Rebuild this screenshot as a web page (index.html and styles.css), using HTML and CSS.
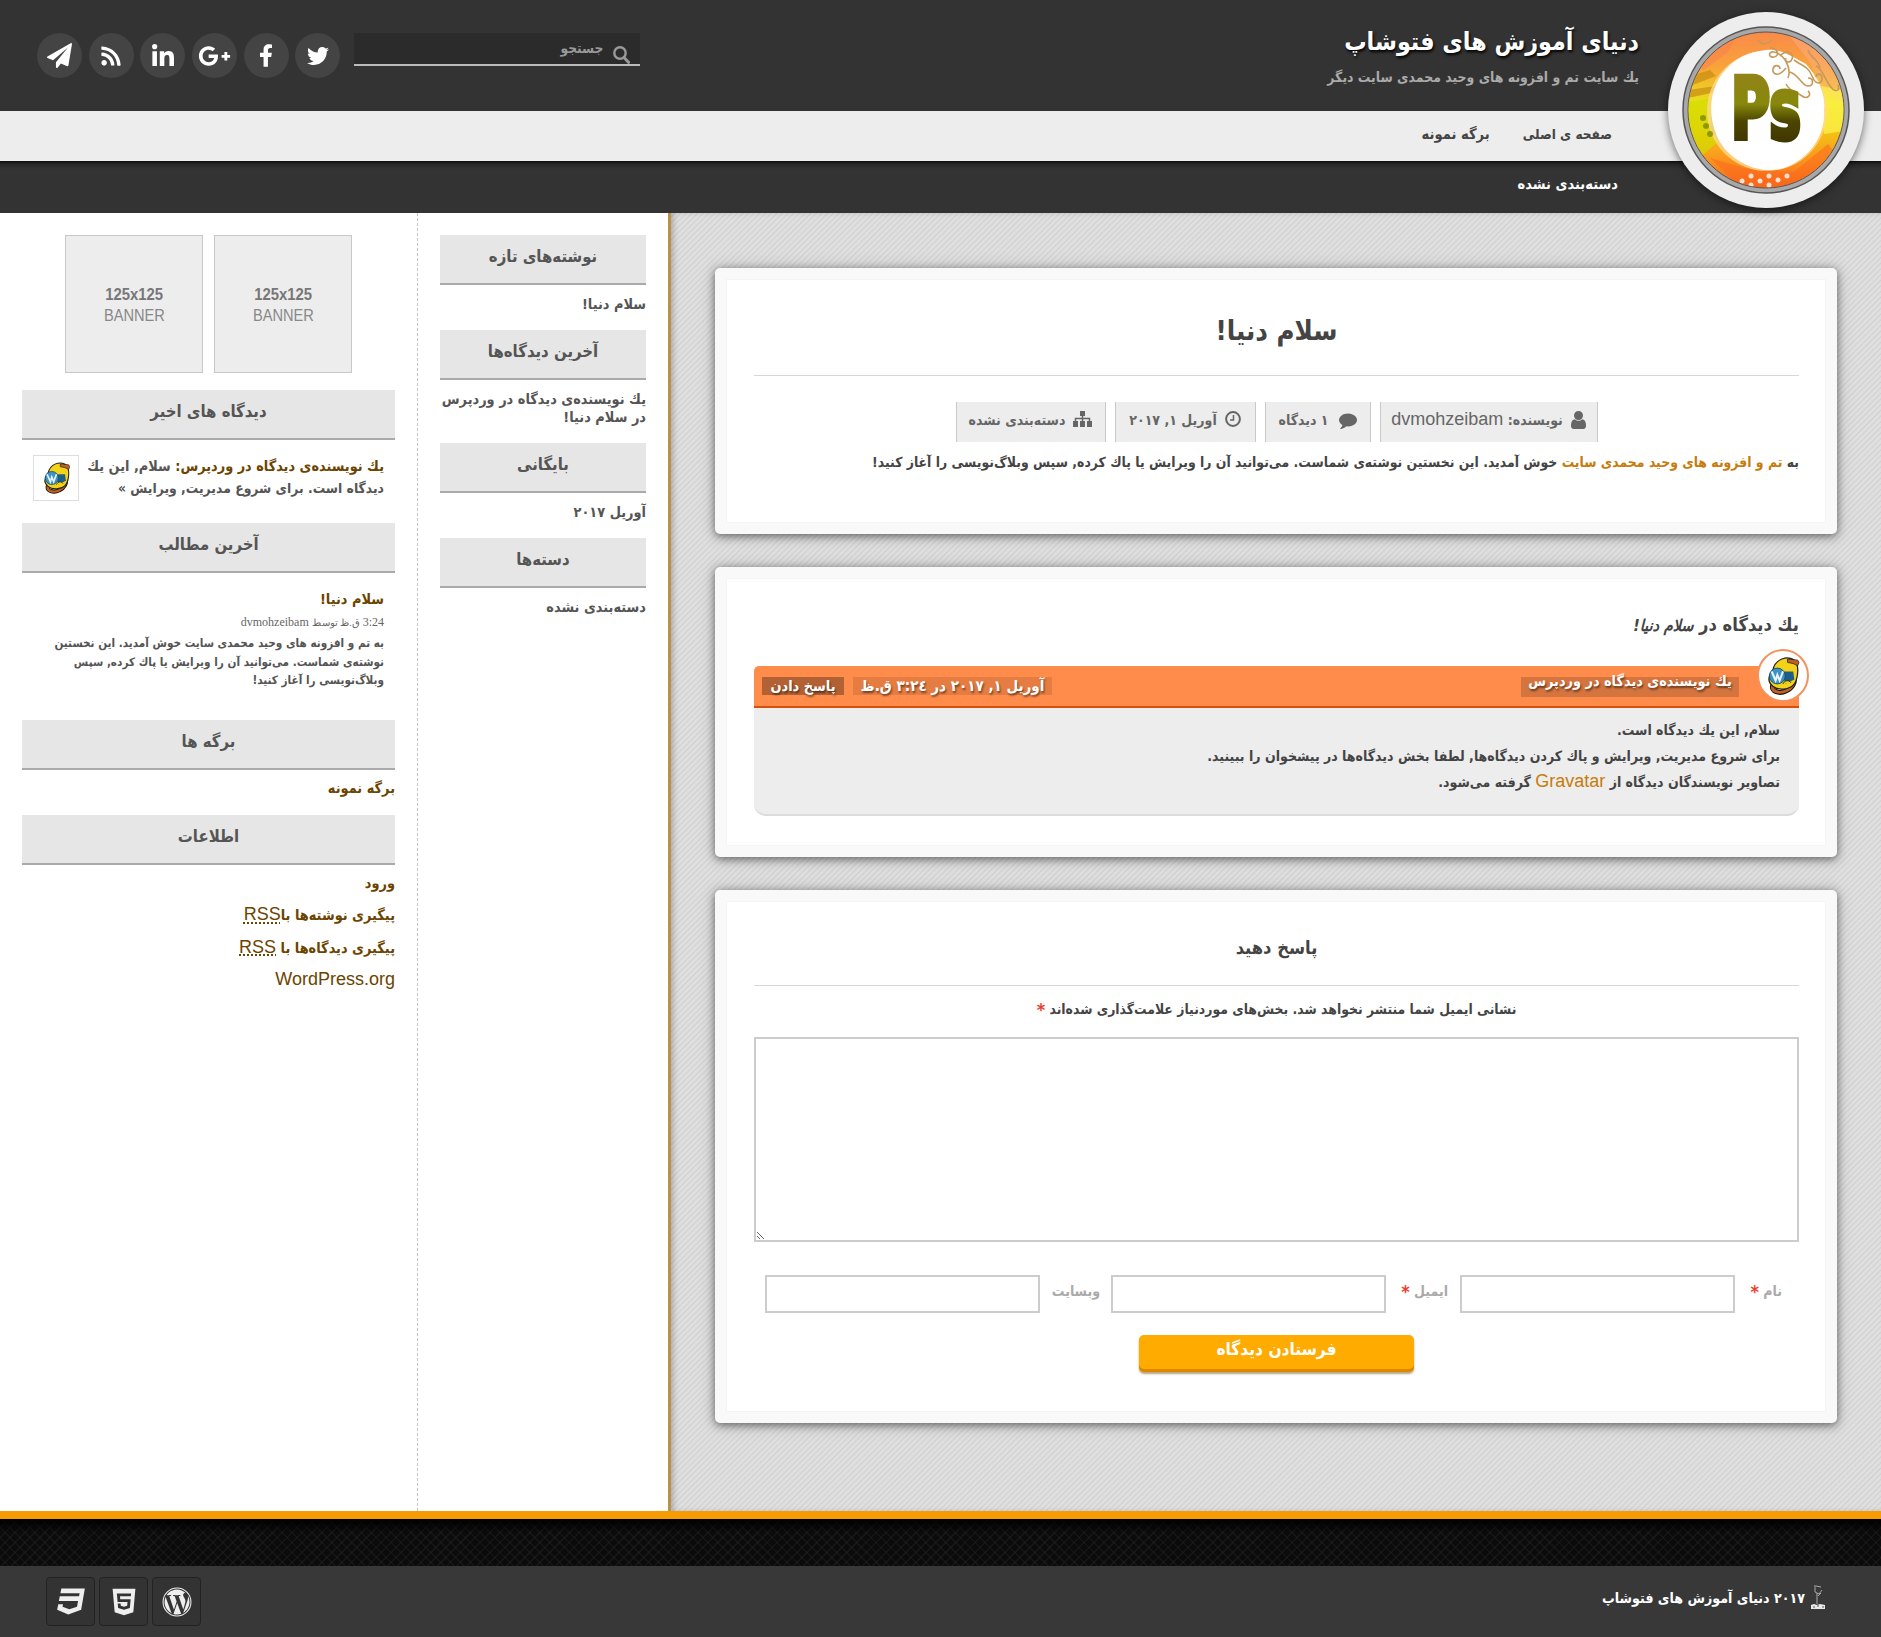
FILE: index.html
```html
<!DOCTYPE html>
<html lang="fa" dir="rtl">
<head>
<meta charset="utf-8">
<title>سلام دنیا!</title>
<link rel="stylesheet" href="styles.css">
</head>
<body>
<svg width="0" height="0" class="defs">
  <defs>
    <symbol id="wapuu" viewBox="0 0 30 34">
      <path d="M6 25c-2 6 6 8 12 5 5-2 8-7 7-13" fill="none" stroke="#111" stroke-width="4.400"/>
      <path d="M6 25c-2 6 6 8 12 5 5-2 8-7 7-13" fill="none" stroke="#c2601f" stroke-width="2.600"/>
      <path d="M14 2c5-2 11-1 13 4s1 15-3 19-13 5-18 1-4-9 0-14c1-5 3-8 8-10z" fill="#f4d218" stroke="#222" stroke-width="1.100"/>
      <path d="M19 2l9 1 1 2-1 3-4-2-5-1z" fill="#c2601f" stroke="#222" stroke-width=".7"/>
      <path d="M14 13h10l1 7-8 4z" fill="#1d5f86"/>
      <circle cx="10" cy="17" r="7" fill="#3a93c4" stroke="#1c4a66" stroke-width=".8"/>
      <path d="M5 13l3.500 8 1.500-5 2 5 3-8" fill="none" stroke="#e8f4fb" stroke-width="1.800"/>
      <path d="M15 24c1-3 5-4 7-1" fill="#f4d218" stroke="#222" stroke-width=".8"/>
    </symbol>
  </defs>
</svg>
<header class="header">
  <div class="top">
    <div class="brand">
      <h1>دنیای آموزش های فتوشاپ</h1>
      <p>یك سایت تم و افزونه های وحید محمدی سایت دیگر</p>
    </div>
    <div class="tools">
      <div class="search">
        <svg width="17" height="18" viewBox="0 0 17 18"><circle cx="7" cy="7" r="5.700" fill="none" stroke="#999" stroke-width="2.400"/><path d="M11 11.500l4.500 4.800" stroke="#999" stroke-width="3" stroke-linecap="round"/></svg>
        <span>جستجو</span>
      </div>
      <ul class="social">
        <li><svg width="22" height="22" viewBox="0 0 512 512"><path d="M459.370 151.716c.325 4.548.325 9.097.325 13.645 0 138.720-105.583 298.558-298.558 298.558-59.452 0-114.680-17.219-161.137-47.106 8.447.974 16.568 1.299 25.340 1.299 49.055 0 94.213-16.568 130.274-44.832-46.132-.975-84.792-31.188-98.112-72.772 6.498.974 12.995 1.624 19.818 1.624 9.421 0 18.843-1.300 27.614-3.573-48.081-9.747-84.143-51.980-84.143-102.985v-1.299c13.969 7.797 30.214 12.670 47.431 13.319-28.264-18.843-46.781-51.005-46.781-87.391 0-19.492 5.197-37.360 14.294-52.954 51.655 63.675 129.300 105.258 216.365 109.807-1.624-7.797-2.599-15.918-2.599-24.040 0-57.828 46.782-104.934 104.934-104.934 30.213 0 57.502 12.670 76.670 33.137 23.715-4.548 46.456-13.320 66.599-25.340-7.798 24.366-24.366 44.833-46.132 57.827 21.117-2.273 41.584-8.122 60.426-16.243-14.292 20.791-32.161 39.308-52.628 54.253z"/></svg></li>
        <li><svg width="14" height="23" viewBox="0 0 320 512"><path d="M279.140 288l14.220-92.660h-88.910v-60.130c0-25.350 12.420-50.060 52.240-50.060h40.420V6.260S260.430 0 225.360 0c-73.220 0-121.080 44.380-121.080 124.720v70.620H22.890V288h81.390v224h100.170V288z"/></svg></li>
        <li><svg width="33" height="26" viewBox="0 0 640 512"><path d="M386.061 228.496c1.834 9.692 3.143 19.384 3.143 31.956C389.204 370.205 315.599 448 204.800 448c-106.084 0-192-85.915-192-192s85.916-192 192-192c51.864 0 95.083 18.859 128.611 50.292l-52.126 50.030c-14.145-13.621-39.028-29.599-76.485-29.599-65.484 0-118.920 54.221-118.920 121.277 0 67.056 53.436 121.277 118.920 121.277 75.961 0 104.513-54.745 108.965-82.773H204.800v-66.009h181.261zm185.406 6.437V179.200h-56.001v55.733h-55.733v56.001h55.733v55.733h56.001v-55.733H627.200v-56.001h-55.733z"/></svg></li>
        <li><svg width="22" height="24" viewBox="0 0 448 490"><path d="M100.280 448H7.400V148.900h92.880zM53.790 108.100C24.090 108.100 0 83.500 0 53.800a53.790 53.790 0 0 1 107.580 0c0 29.700-24.100 54.300-53.790 54.300zM447.900 448h-92.680V302.400c0-34.700-.7-79.200-48.290-79.200-48.290 0-55.690 37.700-55.690 76.700V448h-92.780V148.900h89.080v40.800h1.300c12.400-23.500 42.690-48.300 87.880-48.300 94 0 111.280 61.900 111.280 142.300V448z"/></svg></li>
        <li><svg width="20" height="22" viewBox="0 0 448 512"><path d="M128.081 415.959c0 35.369-28.672 64.041-64.041 64.041S0 451.328 0 415.959s28.672-64.041 64.041-64.041 64.040 28.673 64.040 64.041zm175.660 47.250c-8.354-154.600-132.185-278.587-286.950-286.950C7.656 175.765 0 183.105 0 192.253v48.069c0 8.415 6.490 15.472 14.887 16.018 111.832 7.284 201.473 96.702 208.772 208.772.547 8.397 7.604 14.887 16.018 14.887h48.069c9.149.001 16.489-7.655 15.995-16.790zm144.249.288C439.596 229.677 251.465 40.445 16.503 32.010 7.473 31.686 0 38.981 0 48.016v48.068c0 8.625 6.835 15.645 15.453 15.999 191.179 7.839 344.627 161.316 352.465 352.465.353 8.618 7.373 15.453 15.999 15.453h48.068c9.034-.001 16.329-7.474 16.005-16.504z"/></svg></li>
        <li><svg width="25" height="25" viewBox="0 0 1792 1792"><path d="M1764 11q33 24 27 64l-256 1536q-5 29-32 45-14 8-31 8-11 0-24-5l-453-185-242 295q-18 23-49 23-13 0-22-4-19-7-30.500-23.500t-11.500-36.500v-349l864-1059-1069 925-395-162q-37-14-40-55-2-40 32-59l1664-960q15-9 32-9 20 0 36 11z"/></svg></li>
      </ul>
    </div>
  </div>
  <nav class="nav"><a>صفحه ی اصلی</a><a class="n2">برگه نمونه</a></nav>
  <nav class="subnav"><a>دسته‌بندی نشده</a></nav>
  <div class="logo">
    <svg width="168" height="168" viewBox="0 0 168 168">
      <defs>
        <linearGradient id="rim" x1="0" y1="0" x2="0" y2="1"><stop offset="0" stop-color="#f98a4b"/><stop offset=".22" stop-color="#f9a23a"/><stop offset=".45" stop-color="#e8e01c"/><stop offset=".6" stop-color="#f0cd10"/><stop offset=".8" stop-color="#fb9a1e"/><stop offset="1" stop-color="#f4631c"/></linearGradient>
        <linearGradient id="ink" x1="0" y1="0" x2="0" y2="1"><stop offset="0" stop-color="#97801d"/><stop offset=".45" stop-color="#87880c"/><stop offset=".62" stop-color="#4c4600"/><stop offset="1" stop-color="#352a00"/></linearGradient>
        <clipPath id="disc"><circle cx="84" cy="84" r="77.500"/></clipPath>
      </defs>
      <circle cx="84" cy="84" r="83" fill="#a8a8a8" stroke="#555" stroke-width="1.500"/>
      <circle cx="84" cy="84" r="78" fill="url(#rim)" stroke="#555"/>
      <g clip-path="url(#disc)">
        <path d="M0 0h60L46 26 22 44 8 40z" fill="#fb7e4d" opacity=".5"/>
        <path d="M100 0l68 10v70l-22-10-20-36z" fill="#ffb08a" opacity=".45"/>
        <path d="M6 76l26-4 10 38-22 20-14-14z" fill="#d3dc00" opacity=".7"/>
        <path d="M32 72c8 10 14 30 10 52l-14-22z" fill="#8f9a00" opacity=".6"/>
        <path d="M140 60l28 6v38l-26 4z" fill="#fff34f" opacity=".7"/>
        <path d="M8 50l20-6 6 6-26 10zM6 64l28-4v6l-28 6z" fill="#c98b12" opacity=".7"/>
        <path d="M28 132l34 10 50 4 34-28 8 10-30 34H60z" fill="#fd6a1b" opacity=".55"/>
        <circle cx="85" cy="85" r="60" fill="#ffd98e" opacity=".8"/>
        <path d="M84 24c14-2 28 8 40 14 10 12 20 28 18 46 2 26-16 50-40 58-26 8-58-8-68-34-8-20-6-44 6-60 12-16 26-22 44-24z" fill="#fff"/>
        <g fill="#fff" opacity=".8"><circle cx="60" cy="155" r="2.500"/><circle cx="69" cy="150" r="2.500"/><circle cx="69" cy="159" r="2.500"/><circle cx="78" cy="155" r="2.500"/><circle cx="87" cy="150" r="2.500"/><circle cx="87" cy="159" r="2.500"/><circle cx="96" cy="154" r="2.500"/><circle cx="105" cy="150" r="2.500"/></g>
        <g fill="#7c8900" opacity=".8"><circle cx="21" cy="92" r="3"/><circle cx="24" cy="100" r="3"/><circle cx="28" cy="108" r="3"/></g>
        <g fill="none" stroke="#c79a5c" stroke-width="1.600"><path d="M76 14c4 6 10 4 14 0M88 22c8 0 10 8 4 9s-6-6 0-5c10 2 18 16 14 26M98 30c8-8 14-2 12 3s-8 3-6-1M104 42c-8 10-14 6-13 1s7-4 7 0M108 46c10 4 12 14 18 14s6-8 0-8M112 34c8 6 14 6 18 16s10 8 10 2-6-4-6-1M104 58c4 8 10 8 16 12s10-2 6-5M134 40c6 2 8 12 14 20s10 4 8-1M126 24c2 8 10 8 12 18"/></g>
      </g>
      <text x="49" y="113" direction="ltr" class="ps" textLength="70" lengthAdjust="spacingAndGlyphs" fill="url(#ink)" stroke="url(#ink)" stroke-width="5">Ps</text>
    </svg>
  </div>
</header>

<div class="page">
  <main class="main">
    <article class="card post">
      <h2 class="post-title">سلام دنیا!</h2>
      <div class="meta">
        <span class="m1"><svg width="15" height="18" viewBox="256 128 1280 1536"><path d="M1536 1399q0 109-62.500 187t-150.500 78h-854q-88 0-150.500-78t-62.500-187q0-85 8.500-160.500t31.500-152 58.500-131 94-89 134.500-34.500q131 128 313 128t313-128q76 0 134.500 34.500t94 89 58.500 131 31.500 152 8.500 160.500zm-256-887q0 159-112.500 271.500t-271.500 112.500-271.500-112.500-112.500-271.500 112.500-271.500 271.500-112.500 271.500 112.500 112.500 271.500z"/></svg><i>نویسنده: <b class="lat">dvmohzeibam</b></i></span>
        <span class="m2"><svg width="18" height="18" viewBox="0 0 1792 1792"><path d="M1792 896q0 174-120 321.500t-326 233-450 85.500q-70 0-145-8-198 175-460 242-49 14-114 22-17 2-30.500-9t-17.500-29v-1q-3-4-.5-12t2-10 4.500-9.500l6-9 7-8.500 8-9q7-8 31-34.500t34.500-38 31-39.500 32.500-51 27-59 26-76q-157-89-247.500-220t-90.500-281q0-130 71-248.500t191-204.500 286-136.500 348-50.500q244 0 450 85.500t326 233 120 321.500z"/></svg><i>۱ دیدگاه</i></span>
        <span class="m3"><svg width="16" height="16" viewBox="0 0 16 16"><circle cx="8" cy="8" r="6.900" fill="none" stroke="#666" stroke-width="2"/><path d="M8.500 4v5H5" fill="none" stroke="#666" stroke-width="1.500"/></svg><i>آوریل <b class="num">۱, ۲۰۱۷</b></i></span>
        <span class="m4"><svg width="19" height="16" viewBox="0 0 19 16"><path d="M7 0h5v5H7zM0 10h5v6H0zM7 10h5v6H7zM14 10h5v6h-5z"/><path d="M9.500 4v7M2.500 11V7.500h14V11" fill="none" stroke="#666" stroke-width="1.500"/></svg><i>دسته‌بندی نشده</i></span>
      </div>
      <p class="post-text">به <a>تم و افزونه های وحید محمدی سایت</a> خوش آمدید. این نخستین نوشته‌ی شماست. می‌توانید آن را ویرایش یا پاك كرده, سپس وبلاگ‌نویسی را آغاز كنید!</p>
    </article>

    <section class="card comments">
      <h3 class="comments-title">یك دیدگاه در <em>سلام دنیا!</em></h3>
      <div class="comment">
        <div class="comment-head">
          <span class="author">یك نویسنده‌ی دیدگاه در وردپرس</span>
          <span class="date">آوریل ۱, ۲۰۱۷ در ۳:۲٤ ق.ظ</span>
          <span class="reply">پاسخ دادن</span>
          <span class="avatar"><svg width="34" height="40"><use href="#wapuu"/></svg></span>
        </div>
        <div class="comment-body">
          <p class="c1">سلام, این یك دیدگاه است.</p>
          <p>برای شروع مدیریت, ویرایش و پاك كردن دیدگاه‌ها, لطفا بخش دیدگاه‌ها در پیشخوان را ببینید.</p>
          <p>تصاویر نویسندگان دیدگاه از <a class="lat">Gravatar</a> گرفته می‌شود.</p>
        </div>
      </div>
    </section>

    <section class="card respond">
      <h3 class="respond-title">پاسخ دهید</h3>
      <p class="note">نشانی ایمیل شما منتشر نخواهد شد. بخش‌های موردنیاز علامت‌گذاری شده‌اند <b class="req">*</b></p>
      <textarea class="area" aria-label="دیدگاه"></textarea>
      <div class="fields">
        <label>نام <b class="req">*</b></label><input type="text" class="f1">
        <label class="l2">ایمیل <b class="req">*</b></label><input type="text" class="f2">
        <label class="l3">وبسایت</label><input type="text">
      </div>
      <button class="submit">فرستادن دیدگاه</button>
    </section>
  </main>

  <aside class="side-mid">
    <h4>نوشته‌های تازه</h4><p>سلام دنیا!</p>
    <h4>آخرین دیدگاه‌ها</h4><p class="two">یك نویسنده‌ی دیدگاه در وردپرس<br>در سلام دنیا!</p>
    <h4>بایگانی</h4><p>آوریل <b class="num">۲۰۱۷</b></p>
    <h4>دسته‌ها</h4><p>دسته‌بندی نشده</p>
  </aside>

  <aside class="side-left">
    <div class="banners">
      <div class="banner"><strong>125x125</strong><span>BANNER</span></div>
      <div class="banner"><strong>125x125</strong><span>BANNER</span></div>
    </div>
    <h4>دیدگاه های اخیر</h4>
    <div class="recent">
      <p><a>یك نویسنده‌ی دیدگاه در وردپرس:</a> سلام, این یك<br><span class="l">دیدگاه است. برای شروع مدیریت, ویرایش »</span></p>
      <span class="thumb"><svg width="29" height="32"><use href="#wapuu"/></svg></span>
    </div>
    <h4>آخرین مطالب</h4>
    <div class="latest">
      <a>سلام دنیا!</a>
      <small>3:24 <span>ق.ظ توسط</span> dvmohzeibam</small>
      <p>به تم و افزونه های وحید محمدی سایت خوش آمدید. این نخستین<br>نوشته‌ی شماست. می‌توانید آن را ویرایش یا پاك كرده, سپس<br>وبلاگ‌نویسی را آغاز كنید!</p>
    </div>
    <h4>برگه ها</h4>
    <ul class="links one"><li>برگه نمونه</li></ul>
    <h4>اطلاعات</h4>
    <ul class="links">
      <li>ورود</li>
      <li>پیگیری نوشته‌ها با<abbr class="lat">RSS</abbr></li>
      <li>پیگیری دیدگاه‌ها با <abbr class="lat">RSS</abbr></li>
      <li><span class="lat">WordPress.org</span></li>
    </ul>
  </aside>
</div>

<footer>
  <div class="pattern"></div>
  <div class="bottom">
    <div class="copy">
      <svg width="16" height="26" viewBox="0 0 16 26"><path d="M1 25v-4l3-1 3 1 3-1 5 1v4z" fill="#e8e8e8"/><path d="M7 20V9M5 1v7l4 2 3-4M6 2l5 1M8 12l3-3" stroke="#aaa" fill="none"/><path d="M3 23h2m2-1h2m3 1h2" stroke="#555"/></svg>
      <span>۲۰۱۷ دنیای آموزش های فتوشاپ</span>
    </div>
    <div class="badges">
      <span><svg width="30" height="30" viewBox="0 0 512 512"><circle cx="256" cy="256" r="238" fill="none" stroke="#eee" stroke-width="18"/><path d="M61.700 169.400l101.500 278C92.200 413 43.300 340.200 43.300 256c0-30.900 6.600-60.100 18.400-86.600zm337.900 75.900c0-26.300-9.400-44.500-17.500-58.700-10.800-17.500-20.900-32.400-20.900-49.900 0-19.600 14.800-37.800 35.700-37.800.9 0 1.800.1 2.800.2-37.900-34.700-88.300-55.900-143.700-55.900-74.300 0-139.700 38.100-177.800 95.900 5 .2 9.700.3 13.700.3 22.200 0 56.700-2.700 56.700-2.700 11.500-.7 12.800 16.200 1.400 17.500 0 0-11.500 1.300-24.300 2l77.500 230.400L249.800 247l-33.100-90.800c-11.500-.7-22.300-2-22.300-2-11.500-.7-10.100-18.200 1.300-17.500 0 0 35.100 2.700 56 2.700 22.200 0 56.700-2.700 56.700-2.700 11.500-.7 12.800 16.200 1.400 17.500 0 0-11.500 1.300-24.300 2l76.900 228.700 21.200-70.900c9-29.400 16-50.500 16-68.700zm-139.900 29.300l-63.800 185.500c19.100 5.600 39.200 8.700 60.100 8.700 24.800 0 48.500-4.300 70.600-12.100-.6-.9-1.100-1.900-1.500-2.900l-65.400-179.200zm183-120.700c.9 6.800 1.400 14 1.400 21.900 0 21.600-4 45.800-16.200 76.200l-65 187.900C426.200 403 468.700 334.500 468.700 256c0-37-9.400-71.800-26-102.100z"/></svg></span>
      <span><svg width="24" height="28" viewBox="0 20 384 472"><path d="M0 32l34.900 395.800L191.500 480l157.600-52.200L384 32H0zm308.200 127.900H124.400l4.100 49.400h175.600l-13.600 148.400-97.900 27v.3h-1.100l-98.700-27.300-6-75.800h47.700L138 320l53.500 14.500 53.700-14.500 6-62.200H84.300L71.500 112.200h241.100l-4.400 47.700z"/></svg></span>
      <span><svg width="28" height="27" viewBox="0 22 480 468"><path d="M480 32l-64 368-223.300 80L0 400l19.600-94.800h82l-8 40.600L210 390.200l134.100-44.400 18.800-97.100H29.500l16-82h333.700l10.500-52.700H56.300l16.300-82H480z"/></svg></span>
    </div>
  </div>
</footer>
</body>
</html>
```
FILE: styles.css
```css
* { box-sizing: border-box; }
body {
  margin: 0;
  width: 1881px;
  font: bold 14px/22px "DejaVu Sans Condensed", "DejaVu Sans", sans-serif;
  color: #444;
  background: #fff;
  white-space: nowrap;
}
h1, h2, h3, h4, p, ul { margin: 0; padding: 0; }
ul { list-style: none; }
i { font-style: normal; }
.defs { position: absolute; }
.lat { font: 18px "Liberation Sans", Arial, sans-serif; }
.num { letter-spacing: 1.500px; }

/* header */
.header { position: relative; height: 213px; }
.top { height: 111px; background: #333; display: flex; justify-content: space-between; padding: 0 242px 0 37px; }
.brand h1 { font-size: 24.800px; line-height: 36px; color: #fff; padding-top: 24px; text-shadow: 1px 2px 3px #000; }
.brand p { font-size: 13.900px; line-height: 22px; color: #aaa; padding-top: 6px; }
.tools { display: flex; padding-top: 33px; gap: 14px; }
.search { width: 286px; height: 33px; background: #2b2b2b; border-bottom: 2px solid #bbb; display: flex; padding-right: 10px; gap: 10px; color: #999; font-size: 13.700px; line-height: 30px; }
.search svg { margin-top: 13px; }
.social { display: flex; gap: 6.700px; }
.social li { width: 45px; height: 45px; border-radius: 50%; background: #444; display: flex; align-items: center; justify-content: center; }
.social svg { fill: #fff; }
.nav { height: 50px; background: #ededed; display: flex; gap: 33px; padding-right: 269px; line-height: 46px; color: #444; font-size: 13.500px; }
.n2 { font-size: 14.600px; }
.subnav { height: 52px; background: linear-gradient(#0d0d0d, #262626 3px, #333 8px); padding-right: 263px; line-height: 46px; color: #fff; font-size: 14.500px; }
.logo { position: absolute; left: 1668px; top: 12px; width: 196px; height: 196px; border-radius: 50%; background: #ededed; padding: 14px; box-shadow: 0 2px 8px rgba(0,0,0,.55); }
.logo svg { display: block; }
.ps { font: bold 86px "DejaVu Sans Condensed", sans-serif; }

/* columns */
.page { display: flex; height: 1298px; }
.main {
  width: 1210px; padding: 55px 44px 0; display: flex; flex-direction: column; gap: 33px;
  background: repeating-linear-gradient(135deg, #dfdfdf 0 2px, #cfcfcf 3px, #dfdfdf 4px);
  box-shadow: inset 4px 0 6px -2px rgba(0,0,0,.25);
}
.side-mid { width: 254px; border-right: 3px solid #b8914a; border-left: 1px dashed #c4c4c4; padding: 22px 22px 0; color: #555; }
.side-left { width: 417px; padding: 22px 22px 0; color: #555; }
aside h4 { height: 50px; background: #e6e6e6; border-bottom: 2px solid #aaa; text-align: center; font-size: 16.600px; line-height: 44px; color: #555; }

/* cards */
.card {
  border: 11px solid #f9f9f9; border-radius: 5px; background: #fff; padding: 0 27px 0 28px;
  background-clip: padding-box;
  box-shadow: 0 2px 8px rgba(0,0,0,.5), 0 1px 18px rgba(0,0,0,.16), inset 0 0 0 1px #f4f4f4;
}
.post { height: 266px; }
.comments { height: 290px; }
.respond { height: 533px; }
.post-title { height: 97px; border-bottom: 1px solid #d8d8d8; text-align: center; font-size: 27.400px; line-height: 104px; }
.meta { display: flex; justify-content: center; gap: 9px; margin-top: 26px; color: #666; }
.meta span { height: 40px; background: #ededed; border: solid #c8c8c8; border-width: 0 1px; display: flex; justify-content: center; gap: 8px; line-height: 36px; }
.meta svg { fill: #666; margin-top: 9px; }
.meta .m1 { width: 218px; }
.meta .m2 { width: 106px; gap: 10px; }
.meta .m3 { width: 141px; }
.meta .m4 { width: 150px; }
.meta i { line-height: 36px; }
.post-text { margin-top: 9px; font-size: 13.870px; line-height: 22px; }
.post-text a { color: #c77b0a; }
.comments-title { height: 88px; font-size: 18.200px; line-height: 94px; }
.comments-title em { font-size: 16px; }
.comment-head { position: relative; height: 42px; background: #ff8c4b; border-bottom: 2px solid #d9500b; border-radius: 5px 5px 0 0; display: flex; gap: 9px; padding: 11px 60px 0 8px; color: #fff; text-shadow: 1px 2px 2px rgba(0,0,0,.5); line-height: 18px; }
.author { width: 218px; height: 20px; background: rgba(0,0,0,.17); text-align: center; font-size: 14.350px; line-height: 9px; margin-left: auto; }
.date { width: 199px; height: 18px; background: rgba(0,0,0,.1); text-align: center; font-size: 15px; }
.reply { width: 82px; height: 18px; background: rgba(0,0,0,.3); text-align: center; font-size: 14.400px; }
.avatar { position: absolute; right: -10px; top: -17px; width: 52px; height: 53px; border-radius: 50%; border: 2px solid #f2925c; background: #fff; display: flex; align-items: center; justify-content: center; }
.comment-body { height: 108px; background: #ededed; border-bottom: 2px solid #dcdcdc; border-radius: 0 0 12px 12px; padding: 9px 19px 0; font-size: 14px; line-height: 26px; }
.comment-body p { height: 26px; line-height: 26px; }
.comment-body a { color: #c77b0a; }
.respond-title { height: 85px; border-bottom: 1px solid #d8d8d8; text-align: center; font-size: 18.200px; line-height: 94px; }
.note { height: 51px; text-align: center; font-size: 13.850px; line-height: 46px; }
.req { color: #f03c2d; font-size: 18px; line-height: 1; vertical-align: -2px; }
.area { display: block; width: 1045px; height: 205px; border: 2px solid #ccc; background: #fff; margin: 0; border-radius: 0; resize: both; }
.fields { display: flex; align-items: flex-start; margin-top: 33px; padding-right: 17px; color: #aaa; line-height: 33px; font-size: 14px; }
.fields label { width: 34px; margin-left: 13px; }
.fields .l2 { width: 49px; margin-left: 13px; margin-right: 12px; }
.fields .l3 { width: 49px; margin: 0 11px 0 11px; }
.fields input { width: 275px; height: 38px; border: 2px solid #ccc; background: #fff; padding: 0; border-radius: 0; }
.submit { display: block; width: 275px; height: 37px; margin: 22px auto 0; border: 0; border-radius: 5px; background: #ffab00; color: #fff; font: bold 17.200px/28px "DejaVu Sans Condensed", sans-serif; padding: 0 0 9px; box-shadow: inset 0 -3px 0 #db8800, 0 2px 2px rgba(120,70,0,.5); }

/* middle sidebar */
.side-mid p { height: 45px; font-size: 14.400px; line-height: 38px; }
.side-mid .two { height: 63px; line-height: 18px; padding-top: 10px; }

/* outer sidebar */
.banners { display: flex; justify-content: center; gap: 11px; margin-bottom: 17px; }
.banner { width: 138px; height: 138px; background: #ededed; border: 1px solid #c8c8c8; display: flex; flex-direction: column; align-items: center; justify-content: center; font: 17px/21px "Liberation Sans", sans-serif; color: #888; padding-top: 2px; }
.banner strong { color: #777; font-size: 16px; transform: scaleX(.93); }
.banner span { transform: scaleX(.86); }
.recent { display: flex; justify-content: space-between; height: 83px; padding: 15px 11px 0; line-height: 22px; font-size: 14.350px; }
.recent .l { font-size: 13.800px; }
.recent a, .latest a, .links { color: #6b4400; }
.thumb { width: 46px; height: 46px; border: 1px solid #ddd; display: flex; align-items: center; justify-content: center; }
.latest { height: 147px; padding: 14px 11px 0; }
.latest a { display: block; height: 27px; font-size: 14.400px; line-height: 24px; }
.latest small { display: block; height: 17px; font: 12px/17px "Liberation Serif", serif; color: #666; }
.latest small span { font-size: 9.800px; }
.latest p { font-size: 11.650px; line-height: 18.700px; padding-top: 3px; }
.links { padding-top: 2px; }
.links li { height: 32.400px; line-height: 32px; font-size: 14.400px; }
.links.one { height: 45px; }
abbr { text-decoration: underline dotted; text-underline-offset: 2px; }

/* footer */
.pattern { height: 55px; border-top: 8px solid #f79c00; border-bottom: 0; background:
  linear-gradient(#000, transparent 14px),
  repeating-linear-gradient(45deg, transparent 0 5px, rgba(38,38,38,.35) 6px 7px),
  repeating-linear-gradient(135deg, #0b0b0b 0 5px, #161616 6px 7px); }
.bottom { height: 71px; background: #383838; display: flex; justify-content: space-between; padding: 0 55px 0 46px; color: #fff; }
.copy { display: flex; gap: 5px; font-size: 14.100px; padding-top: 18px; line-height: 28px; }
.badges { display: flex; gap: 4px; padding-top: 11px; }
.badges span { width: 49px; height: 49px; background: #333; border: 1px solid #222; border-radius: 4px; display: flex; align-items: center; justify-content: center; }
.badges svg { fill: #eee; }
```
